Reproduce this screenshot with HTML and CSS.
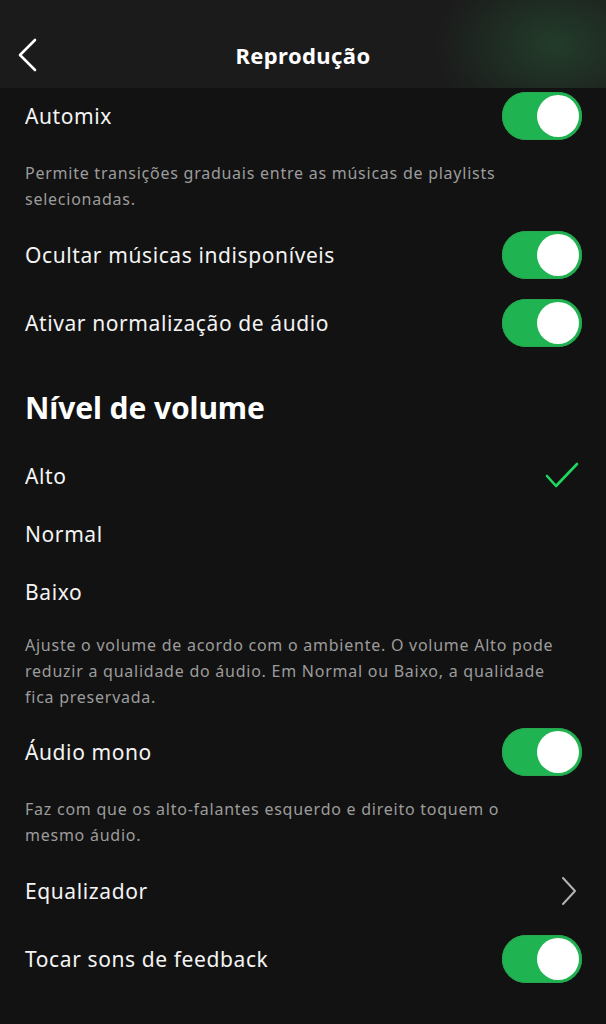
FILE: index.html
```html
<!DOCTYPE html>
<html lang="pt-BR">
<head>
    <meta charset="UTF-8">
    <meta name="viewport" content="width=device-width, initial-scale=1.0">
    <title>Reprodução</title>
    <link rel="stylesheet" href="styles.css">
</head>
<body>
    <header class="topbar">
        <svg class="back" width="20" height="34" viewBox="0 0 20 34">
            <polyline points="17,2 2,17 17,32" fill="none" stroke="#fff" stroke-width="2.6" stroke-linecap="round" stroke-linejoin="round"/>
        </svg>
        <h1 class="title">Reprodução</h1>
    </header>

    <main class="content">
        <div class="row row-first">
            <span class="label">Automix</span>
            <span class="switch on"><span class="knob"></span></span>
        </div>
        <p class="desc desc-automix">Permite transições graduais entre as músicas de playlists<br>selecionadas.</p>

        <div class="row">
            <span class="label">Ocultar músicas indisponíveis</span>
            <span class="switch on"><span class="knob"></span></span>
        </div>
        <div class="row">
            <span class="label">Ativar normalização de áudio</span>
            <span class="switch on"><span class="knob"></span></span>
        </div>

        <h2 class="section">Nível de volume</h2>

        <div class="option option-first">
            <span class="label">Alto</span>
            <svg class="check" width="34" height="28" viewBox="0 0 34 28">
                <polyline points="2,14 11,24 32,2" fill="none" stroke="#1ed760" stroke-width="2.6" stroke-linecap="round" stroke-linejoin="round"/>
            </svg>
        </div>
        <div class="option">
            <span class="label">Normal</span>
        </div>
        <div class="option">
            <span class="label">Baixo</span>
        </div>
        <p class="desc desc-volume">Ajuste o volume de acordo com o ambiente. O volume Alto pode<br>reduzir a qualidade do áudio. Em Normal ou Baixo, a qualidade<br>fica preservada.</p>

        <div class="row row-mono">
            <span class="label">Áudio mono</span>
            <span class="switch on"><span class="knob"></span></span>
        </div>
        <p class="desc desc-mono">Faz com que os alto-falantes esquerdo e direito toquem o<br>mesmo áudio.</p>

        <div class="row row-eq">
            <span class="label">Equalizador</span>
            <svg class="chevron" width="18" height="30" viewBox="0 0 18 30">
                <polyline points="3,2 15,15 3,28" fill="none" stroke="#b3b3b3" stroke-width="2" stroke-linecap="round" stroke-linejoin="round"/>
            </svg>
        </div>
        <div class="row">
            <span class="label">Tocar sons de feedback</span>
            <span class="switch on"><span class="knob"></span></span>
        </div>
    </main>
</body>
</html>
```

FILE: styles.css
```css
body {
    font-family: "Noto Sans", "Liberation Sans", Arial, sans-serif;
    background-color: #121212;
    color: #ffffff;
    margin: 0;
    padding: 0;
}

.topbar {
    height: 88px;
    display: flex;
    align-items: center;
    justify-content: center;
    position: relative;
    background-color: #1b1b1b;
    background-image: radial-gradient(ellipse 120px 85px at 555px 45px, rgba(36, 68, 46, 0.8), rgba(27, 27, 27, 0) 100%);
}

.back {
    position: absolute;
    left: 18px;
    top: 38px;
}

.title {
    margin: 0;
    padding-top: 22px;
    font-size: 22px;
    font-weight: bold;
    letter-spacing: 0.4px;
}

.content {
    padding: 0 24px 0 25px;
}

.row {
    height: 68px;
    display: flex;
    align-items: center;
    justify-content: space-between;
}

.row-first {
    height: 56px;
}

.label {
    font-size: 21px;
    letter-spacing: 0.6px;
    color: #f4f4f4;
}

.switch {
    width: 80px;
    height: 48px;
    border-radius: 24px;
    background-color: #1fb451;
    box-shadow: inset 0 0 0 1px #27a650;
    display: flex;
    align-items: center;
    justify-content: flex-end;
    padding-right: 3px;
    box-sizing: border-box;
}

.knob {
    width: 42px;
    height: 42px;
    border-radius: 50%;
    background-color: #ffffff;
}

.desc {
    margin: 0;
    font-size: 16px;
    line-height: 26px;
    letter-spacing: 0.75px;
    color: #9c9c9c;
    white-space: nowrap;
}

.desc-automix {
    margin-top: 16px;
    margin-bottom: 9px;
}

.section {
    margin: 31px 0 0;
    font-size: 30px;
    line-height: 40px;
    font-weight: bold;
    letter-spacing: -0.1px;
}

.option {
    height: 58px;
    display: flex;
    align-items: center;
    justify-content: space-between;
}

.option-first {
    margin-top: 19px;
}

.check {
    margin-right: 3px;
}

.desc-volume {
    margin-top: 11px;
}

.row-mono {
    margin-top: 8px;
}

.desc-mono {
    margin-top: 10px;
}

.row-eq {
    margin-top: 9px;
}

.chevron {
    margin-right: 4px;
}
```
